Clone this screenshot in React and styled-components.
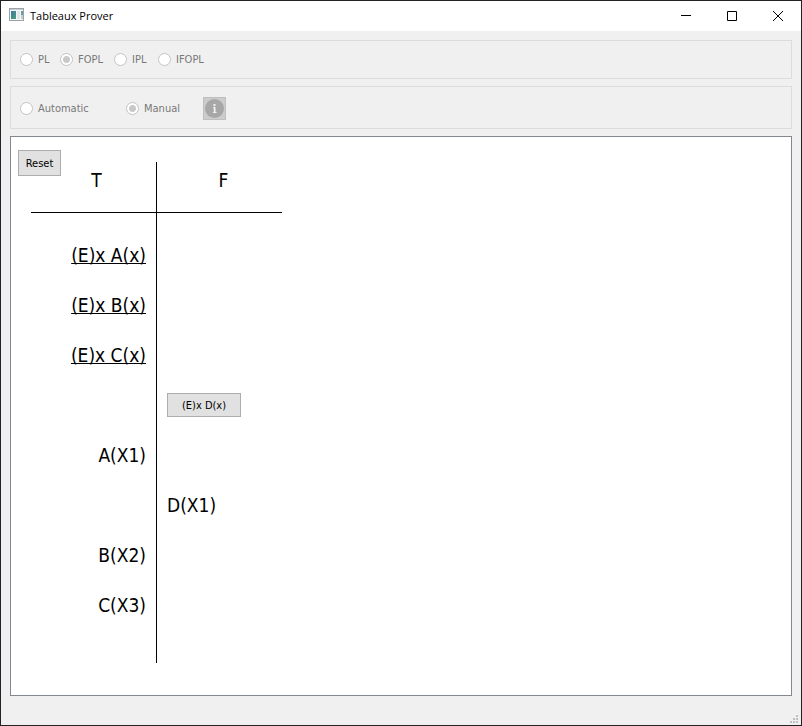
import React from "react";
import styled, { createGlobalStyle } from "styled-components";

const GlobalStyle = createGlobalStyle`
  *, *::before, *::after { box-sizing: border-box; }
  body { margin: 0; background: #f0f0f0; }
`;

const uiFont = '"DejaVu Sans Condensed", "DejaVu Sans", "Noto Sans", sans-serif';

const Window = styled.div`
  display: flex;
  flex-direction: column;
  min-height: 100vh;
  border: 1px solid #232026;
  background: #f0f0f0;
  color: #000;
  font-family: "Noto Sans", sans-serif;
  font-size: 11px;
`;

const TitleBar = styled.header`
  display: flex;
  align-items: center;
  height: 30px;
  padding-left: 8px;
  background: #fff;
`;

const Title = styled.h1`
  flex: 1;
  margin: 0 0 0 5px;
  font-family: "Open Sans", sans-serif;
  font-size: 11px;
  font-weight: 400;
  line-height: 16px;
`;

const CaptionButton = styled.button`
  display: flex;
  align-items: center;
  justify-content: center;
  width: 46px;
  height: 30px;
  padding: 0;
  border: 0;
  background: transparent;
`;

const Content = styled.main`
  display: flex;
  flex: 1;
  flex-direction: column;
  gap: 7px;
  padding: 9px 9px 0;
`;

const OptionGroup = styled.fieldset`
  display: grid;
  grid-template-columns: ${(p) => p.$columns};
  align-items: center;
  min-width: 0;
  margin: 0;
  padding: ${(p) => p.$padding};
  border: 1px solid #dcdcdc;
`;

const RadioLabel = styled.label`
  display: flex;
  align-items: center;
  gap: 5px;
  color: #787878;
  font-family: ${uiFont};
  font-size: 11px;
  line-height: 15px;
  white-space: nowrap;
`;

const RadioInput = styled.input`
  flex: none;
  width: 13px;
  height: 13px;
  margin: 0;
  appearance: none;
  border: 1px solid #c4c4c4;
  border-radius: 50%;
  background: #fff;

  &:checked {
    background: radial-gradient(circle, #c8c8c8 3px, #fff 4px);
  }
`;

const InfoButton = styled.button`
  display: flex;
  align-items: center;
  justify-content: center;
  width: 23px;
  height: 23px;
  padding: 0;
  border: 1px solid #bfbfbf;
  background: #cccccc;
`;

const Canvas = styled.section`
  position: relative;
  flex: 1;
  padding: 25px 20px 32px;
  border: 1px solid #828790;
  background: #fff;
`;

const PushButton = styled.button`
  min-width: ${(p) => p.$width};
  height: ${(p) => p.$height};
  padding: 2px 0 0;
  border: 1px solid #adadad;
  background: #e1e1e1;
  color: #000;
  font-family: ${uiFont};
  font-size: 11px;
  line-height: 14px;
`;

const ResetButton = styled(PushButton)`
  position: absolute;
  top: 13px;
  left: 7px;
`;

const Tableau = styled.table`
  width: 251px;
  table-layout: fixed;
  border-spacing: 0;
  font-family: ${uiFont};
  font-size: 19px;
`;

const SideHead = styled.th`
  width: ${(p) => (p.$side === "T" ? "126px" : "125px")};
  height: 51px;
  padding: ${(p) => (p.$side === "T" ? "0 0 14px 6px" : "0 0 14px 8px")};
  border-bottom: 1px solid #000;
  border-right: ${(p) => (p.$side === "T" ? "1px solid #000" : "0")};
  font-weight: 400;
  line-height: 24px;
`;

const Rows = styled.tbody`
  tr:first-child td { padding-top: 17px; }
  tr:last-child td { padding-bottom: 33px; }
`;

const Cell = styled.td`
  padding: 0 10px;
  border-right: ${(p) => (p.$side === "T" ? "1px solid #000" : "0")};
  text-align: ${(p) => (p.$side === "T" ? "right" : "left")};
  vertical-align: middle;
  line-height: 24px;
  white-space: nowrap;
`;

const Slot = styled.div`
  display: flex;
  align-items: center;
  justify-content: ${(p) => (p.$side === "T" ? "flex-end" : "flex-start")};
  height: 50px;
`;

const Formula = styled.span`
  text-decoration: ${(p) => (p.$used ? "underline" : "none")};
  text-decoration-thickness: 1px;
  text-underline-offset: 1px;
  text-decoration-skip-ink: none;
`;

const StatusBar = styled.footer`
  display: flex;
  align-items: flex-end;
  justify-content: flex-end;
  height: 29px;
  padding: 0 3px 2px 0;
`;

const AppIcon = () => (
  <svg width="16" height="16" viewBox="0 0 16 16" aria-hidden="true">
    <defs>
      <linearGradient id="pane" x1="0" y1="0" x2="1" y2="1">
        <stop offset="0" stopColor="#3c78a8" />
        <stop offset="1" stopColor="#48a078" />
      </linearGradient>
    </defs>
    <rect x="0.5" y="0.5" width="14" height="12" fill="#f4f6f7" stroke="#9ba2a8" />
    <path d="M1 1.5h13" stroke="#c5cbd0" />
    <rect x="2" y="3" width="5" height="8" fill="url(#pane)" />
    <rect x="8" y="3" width="3" height="8" fill="#e2e5e7" />
    <rect x="12" y="3" width="2" height="4" fill="#6c9bab" />
    <rect x="12" y="7" width="2" height="4" fill="#bdd1c7" />
  </svg>
);

const InfoIcon = () => (
  <svg width="21" height="21" viewBox="0 0 21 21" aria-hidden="true">
    <circle cx="10.5" cy="10.5" r="9.5" fill="#a7a7a7" />
    <path d="M9.5 6h2v2h-2zM9 9h2.5v5h1v1H9v-1h.8v-4H9z" fill="#f3f3f3" />
  </svg>
);

const captionIcons = {
  Minimize: <path d="M0 4.5h10" />,
  Maximize: <path d="M.5 .5h9v9h-9z" />,
  Close: <path d="M0 0l10 10M10 0l-10 10" />,
};

const steps = [
  { side: "T", text: "(E)x A(x)", used: true },
  { side: "T", text: "(E)x B(x)", used: true },
  { side: "T", text: "(E)x C(x)", used: true },
  { side: "F", text: "(E)x D(x)", action: true },
  { side: "T", text: "A(X1)" },
  { side: "F", text: "D(X1)" },
  { side: "T", text: "B(X2)" },
  { side: "T", text: "C(X3)" },
];

function Radio({ name, label, checked }) {
  return (
    <RadioLabel>
      <RadioInput type="radio" name={name} defaultChecked={checked} disabled />
      {label}
    </RadioLabel>
  );
}

function Step({ step }) {
  if (step.action) {
    return <PushButton type="button" $width="74px" $height="24px">{step.text}</PushButton>;
  }
  return <Formula $used={step.used}>{step.text}</Formula>;
}

export default function App() {
  return (
    <>
      <GlobalStyle />
      <Window>
        <TitleBar>
          <AppIcon />
          <Title>Tableaux Prover</Title>
          {Object.entries(captionIcons).map(([label, icon]) => (
            <CaptionButton key={label} type="button" aria-label={label}>
              <svg width="10" height="10" viewBox="0 0 10 10" fill="none" stroke="#000">
                {icon}
              </svg>
            </CaptionButton>
          ))}
        </TitleBar>
        <Content>
          <OptionGroup aria-label="Logic" $columns="40px 54px 44px auto" $padding="11px 9px">
            <Radio name="logic" label="PL" />
            <Radio name="logic" label="FOPL" checked />
            <Radio name="logic" label="IPL" />
            <Radio name="logic" label="IFOPL" />
          </OptionGroup>
          <OptionGroup aria-label="Mode" $columns="106px 77px auto" $padding="10px 9px 8px">
            <Radio name="mode" label="Automatic" />
            <Radio name="mode" label="Manual" checked />
            <InfoButton type="button" aria-label="Information" disabled>
              <InfoIcon />
            </InfoButton>
          </OptionGroup>
          <Canvas>
            <Tableau>
              <thead>
                <tr>
                  <SideHead scope="col" $side="T">T</SideHead>
                  <SideHead scope="col" $side="F">F</SideHead>
                </tr>
              </thead>
              <Rows>
                {steps.map((step) => (
                  <tr key={step.text}>
                    {["T", "F"].map((side) => (
                      <Cell key={side} $side={side}>
                        <Slot $side={side}>{step.side === side && <Step step={step} />}</Slot>
                      </Cell>
                    ))}
                  </tr>
                ))}
              </Rows>
            </Tableau>
            <ResetButton type="button" $width="43px" $height="26px">Reset</ResetButton>
          </Canvas>
        </Content>
        <StatusBar>
          <svg width="8" height="8" viewBox="0 0 8 8" fill="#bfbfbf" aria-hidden="true">
            <path d="M6 0h2v2H6zM3 3h2v2H3zM6 3h2v2H6zM0 6h2v2H0zM3 6h2v2H3zM6 6h2v2H6z" />
          </svg>
        </StatusBar>
      </Window>
    </>
  );
}
